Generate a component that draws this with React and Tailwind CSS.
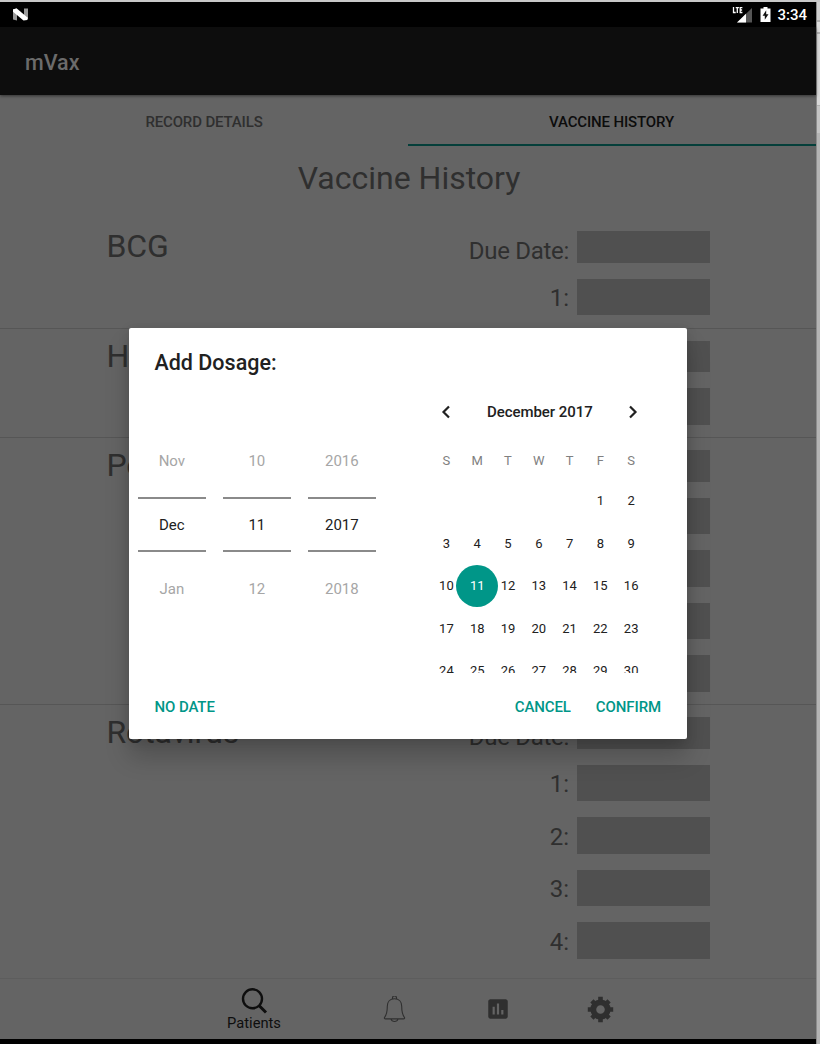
const sections = [
  { name: "BCG", doses: [1] },
  { name: "Hepatitis B", doses: [1] },
  { name: "Pentavalente", doses: [1, 2, 3, 4] },
  { name: "Rotavirus", doses: [1, 2, 3, 4] },
];

const pickers = [
  ["Nov", "Dec", "Jan"],
  ["10", "11", "12"],
  ["2016", "2017", "2018"],
];

const weekdays = ["S", "M", "T", "W", "T", "F", "S"];
const days = [...Array(5).fill(null), ...Array.from({ length: 30 }, (_, i) => i + 1)];

function StatusBar() {
  return (
    <div className="flex h-[25px] shrink-0 items-center justify-between bg-black pl-[12px] pr-[9px] text-white">
      <svg className="h-[13px] w-[17px]" viewBox="0 0 17 13">
        <path d="M1 1l4 1v10.500l-4-1zM12 .5l4 0v11l-4-1z" fill="#9a9a9a" />
        <path d="M1 1.500L4.500 .3l11.300 9.400-.6 2.300-3.700.5L1 3.800z" fill="#fff" />
      </svg>
      <div className="flex items-center">
        <svg className="mr-[8px] h-[18px] w-[20px]" viewBox="0 0 20 18">
          <path d="M20 2v14.500H5z" fill="#555" />
          <path d="M14 7.800v8.700H5z" fill="#fff" />
          <path d="M1.500 1v5.500h2.200M3.700 1.700h3.200M5.300 1.700V7.100M10.400 1.700H8.200V6.500h2.200M8.200 4h1.900" fill="none" stroke="#fff" strokeWidth="1.300" />
        </svg>
        <svg className="mr-[6px] h-[15px] w-[11px]" viewBox="0 0 11 15">
          <path d="M3.500 0h4v1.500h3v13.500H.500V1.500h3z" fill="#fff" />
          <path d="M6.200 3.300L2.600 8.700h2.200v4l3.700-5.500H6.200z" fill="#111" />
        </svg>
        <span className="text-[15px] leading-[20px] font-medium">3:34</span>
      </div>
    </div>
  );
}

function Section({ name, doses }) {
  return (
    <div className="flex shrink-0 justify-between border-b border-[#565656] pb-[12.400px] pl-[106.500px] pr-[106px] pt-[12.100px] last:border-b-0">
      <div className="-mt-[3px] text-[32px] leading-[36px] tracking-[-0.15px]">{name}</div>
      <div className="flex flex-col gap-[16px] text-[24px]">
        <div className="flex h-[31.500px] justify-end gap-[8px]">
          <span className="pt-[4.700px] leading-[31px] tracking-[-0.3px]">Due Date:</span>
          <div className="w-[133px] bg-[#505050]" />
        </div>
        {doses.map((n) => (
          <div key={n} className="flex h-[36.500px] justify-end gap-[8px]">
            <span className="pt-[1.600px] leading-[37px]">{n}:</span>
            <div className="w-[133px] bg-[#505050]" />
          </div>
        ))}
      </div>
    </div>
  );
}

function BottomNav() {
  return (
    <div className="flex h-[61px] shrink-0 border-t border-[#5d5d5d] pl-[202px] text-[#2f2f2f]">
      <div className="flex w-[104px] flex-col items-center pt-[8px] text-[#0e0e0e]">
        <svg className="h-[27px] w-[27px]" viewBox="0 0 27 27" fill="none" stroke="currentColor">
          <circle cx="11.500" cy="11.800" r="9.500" strokeWidth="2.400" />
          <path d="M18 18.500l7 7" strokeWidth="3" />
        </svg>
        <span className="mt-[1px] text-[14.700px] leading-[16px]">Patients</span>
      </div>
      <div className="flex w-[177px] justify-center pt-[17px]">
        <svg className="h-[27px] w-[23px]" viewBox="0 0 23 27" fill="none" stroke="currentColor" strokeWidth="1.100">
          <path d="M9.500 3.200V2a2 2 0 0 1 4 0v1.200M11.500 2.800c-4.500 0-7.200 3.200-7.200 7.500 0 5.500-.3 8-2.800 11.200-.3.800 0 1.400 1 1.400h18c1 0 1.300-.6 1-1.400-2.500-3.200-2.800-5.700-2.800-11.200 0-4.300-2.700-7.500-7.200-7.500zM8 23.200c1 3 6 3 7 0" />
        </svg>
      </div>
      <div className="flex w-[29px] justify-center pt-[17px]">
        <svg className="h-[26px] w-[26px] shrink-0" viewBox="0 0 24 24" fill="currentColor">
          <path d="M19 3H5c-1.100 0-2 .9-2 2v14c0 1.100.9 2 2 2h14c1.100 0 2-.9 2-2V5c0-1.100-.9-2-2-2zM9 17H7v-7h2v7zm4 0h-2V7h2v10zm4 0h-2v-4h2v4z" />
        </svg>
      </div>
      <div className="flex w-[176px] justify-center pt-[17px]">
        <svg className="h-[27px] w-[27px]" viewBox="0 0 27 27" fill="none">
          <circle cx="13.500" cy="13.500" r="7.200" stroke="currentColor" strokeWidth="5.800" />
          <path d="M13.500 .8v5M13.500 21.200v5M.8 13.500h5M21.200 13.500h5M4.900 4.900l3 3M19.100 19.100l3 3M4.900 22.100l3-3M19.100 7.900l3-3" stroke="currentColor" strokeWidth="4.600" />
        </svg>
      </div>
    </div>
  );
}

function Picker({ values }) {
  return (
    <div className="w-[68.500px] text-center text-[15px] text-[#a6a6a6]">
      <div className="h-[54px] leading-[37px]">{values[0]}</div>
      <div className="h-[55px] border-y-2 border-[#8a8a8a] leading-[53px] text-[#212121]">{values[1]}</div>
      <div className="pt-[19px] leading-[36px]">{values[2]}</div>
    </div>
  );
}

function Chevron({ flip }) {
  return (
    <svg className={flip ? "h-[14px] w-[10px] rotate-180" : "h-[14px] w-[10px]"} viewBox="0 0 10 14" fill="none" stroke="#212121" strokeWidth="2.200">
      <path d="M8 1.500L2.500 7 8 12.500" />
    </svg>
  );
}

function Calendar() {
  return (
    <div className="flex w-[215.600px] flex-col text-[#212121]">
      <div className="flex h-[24px] items-center justify-between pl-[10px] pr-[9px]">
        <Chevron />
        <span className="pl-px text-[15px] font-medium tracking-[-0.05px]">December 2017</span>
        <Chevron flip />
      </div>
      <div className="mt-[25px] grid grid-cols-7 text-center text-[13px] leading-[24px] text-[#808080]">
        {weekdays.map((d, i) => (
          <span key={i}>{d}</span>
        ))}
      </div>
      <div className="mt-[7px] grid h-[193px] auto-rows-[42.500px] grid-cols-7 overflow-hidden text-[13px] leading-[42px]">
        {days.map((d, i) => (
          <div key={i} className="flex items-center justify-center">
            {d === 11 ? (
              <span className="h-[42px] w-[42px] shrink-0 rounded-full bg-[#009688] text-center leading-[42px] text-white">11</span>
            ) : (
              d
            )}
          </div>
        ))}
      </div>
    </div>
  );
}

function DosageDialog() {
  return (
    <div className="absolute left-[129px] top-[328px] flex h-[411px] w-[558px] flex-col rounded-[2px] bg-white shadow-[0_18px_24px_rgba(0,0,0,0.2),0_2px_12px_rgba(0,0,0,0.12)]">
      <h2 className="pl-[25.500px] pt-[20px] text-[21.500px] leading-[30px] font-medium text-[#212121]">Add Dosage:</h2>
      <div className="flex h-[295px] pt-[22px]">
        <div className="flex w-[302px] gap-[16.500px] pl-[8.600px] pt-[43px]">
          {pickers.map((values) => (
            <Picker key={values[1]} values={values} />
          ))}
        </div>
        <Calendar />
      </div>
      <div className="flex pl-[25.500px] pr-[26px] pt-[22px] text-[15px] leading-[24px] font-medium tracking-[-0.1px] text-[#009688]">
        <button className="mr-auto">NO DATE</button>
        <button className="mr-[25px]">CANCEL</button>
        <button>CONFIRM</button>
      </div>
    </div>
  );
}

export default function App() {
  return (
    <div className="relative flex h-[1044px] w-[820px] overflow-hidden bg-[#c8c8c8] pt-[2px] font-['Roboto',sans-serif]">
      <div className="flex w-[816px] flex-col bg-[#646464] text-[#2f2f2f]">
        <StatusBar />
        <header className="relative flex h-[68px] shrink-0 items-center bg-[#0d0d0d] pl-[25px] pt-[5px] text-[21.500px] font-medium text-[#6b6b6b] shadow-[0_1px_3px_rgba(0,0,0,0.5)]">
          mVax
        </header>
        <nav className="grid h-[52px] shrink-0 grid-cols-2 text-center text-[15px] font-medium leading-[54px] tracking-[-0.15px]">
          <span className="h-[52px]">RECORD DETAILS</span>
          <span className="h-[51px] border-b-2 border-[#053f3a] pr-px text-[#0c0c0c]">VACCINE HISTORY</span>
        </nav>
        <h1 className="h-[72.300px] shrink-0 pl-[2px] pt-[12px] text-center text-[32px] leading-[38px]">Vaccine History</h1>
        <main className="flex min-h-0 flex-1 flex-col">
          {sections.map((s) => (
            <Section key={s.name} {...s} />
          ))}
        </main>
        <BottomNav />
        <div className="h-[5px] shrink-0 bg-black" />
      </div>
      <div className="flex w-[4px] flex-col border-l border-[#8c8c8c] bg-[#b4b4b4]">
        <div className="h-[18px] bg-[#d0d0d0]" />
        <div className="h-[2px] bg-[#b0b0b0]" />
        <div className="h-[10px] bg-[#dcdcdc]" />
        <div className="h-[2px] bg-[#b0b0b0]" />
        <div className="h-[71px] bg-[#d8d8d8]" />
        <div className="h-[1px] bg-[#b0b0b0]" />
        <div className="h-[27px] bg-[#c4c4c4]" />
      </div>
      <DosageDialog />
    </div>
  );
}
